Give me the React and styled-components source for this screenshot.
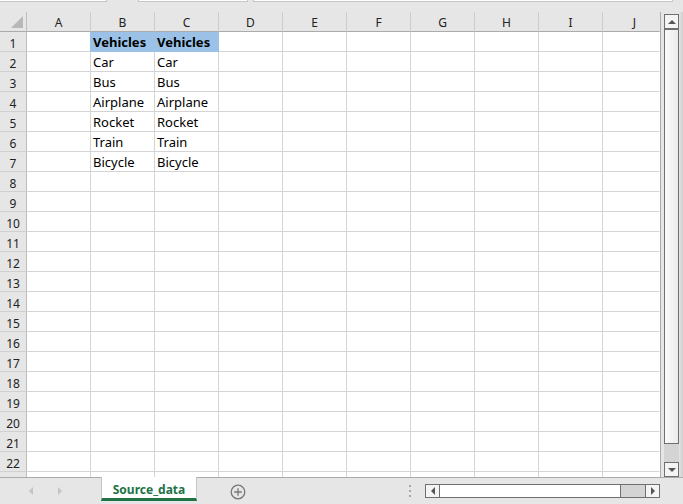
import React from "react";
import styled, { createGlobalStyle } from "styled-components";

const Global = createGlobalStyle`
  html, body { margin: 0; padding: 0; background: #e6e6e6; }
  * { box-sizing: border-box; }
`;

const Frame = styled.div`
  width: 683px;
  height: 504px;
  display: flex;
  flex-direction: column;
  background: #e6e6e6;
  overflow: hidden;
  font-family: "Noto Sans", "Liberation Sans", sans-serif;
`;

const TopStrip = styled.div`
  height: 12px;
  display: flex;
  align-items: flex-start;
  flex: none;
`;

const StripBox = styled.div`
  height: 2px;
  width: ${(p) => (p.$w ? `${p.$w}px` : "auto")};
  flex: ${(p) => (p.$w ? "none" : "1")};
  margin-left: ${(p) => p.$ml || 0}px;
  margin-right: ${(p) => p.$mr || 0}px;
  background: #fff;
  border: 1px solid #c6c6c6;
  border-top: none;
  border-left: ${(p) => (p.$noLeft ? "none" : "1px solid #c6c6c6")};
`;

const Main = styled.div`
  height: 465px;
  display: flex;
  flex: none;
`;

const Sheet = styled.div`
  width: 661px;
  height: 465px;
  overflow: hidden;
  border-right: 1px solid #ababab;
  display: flex;
  flex-direction: column;
  flex: none;
  background: #fff;
`;

const Row = styled.div`
  display: flex;
  height: 20px;
  flex: none;
`;

const Corner = styled.div`
  position: relative;
  width: 27px;
  height: 20px;
  background: #e6e6e6;
  border-right: 1px solid #bdbdbd;
  border-bottom: 1px solid #ababab;
  flex: none;
  &::after {
    content: "";
    position: absolute;
    right: 3px;
    bottom: 3px;
    width: 0;
    height: 0;
    border-left: 12px solid transparent;
    border-bottom: 12px solid #b8b8b8;
  }
`;

const ColHead = styled.div`
  width: ${(p) => p.$w}px;
  height: 20px;
  flex: none;
  background: #e6e6e6;
  border-right: 1px solid ${(p) => (p.$last ? "transparent" : "#cdcdcd")};
  border-bottom: 1px solid #ababab;
  display: flex;
  align-items: center;
  justify-content: center;
  font-size: 12px;
  color: #222;
  line-height: 1;
  padding-top: 3px;
  padding-left: ${(p) => (p.$last ? 7 : 0)}px;
`;

const RowHead = styled.div`
  width: 27px;
  height: 20px;
  flex: none;
  background: #e6e6e6;
  border-right: 1px solid #bdbdbd;
  border-bottom: 1px solid #d0d0d0;
  display: flex;
  align-items: center;
  justify-content: center;
  font-size: 12px;
  color: #222;
  line-height: 1;
  padding-top: 4px;
`;

const Cell = styled.div`
  width: ${(p) => p.$w}px;
  height: 20px;
  flex: none;
  background: ${(p) => (p.$fill ? "#9bc2e6" : "#fff")};
  border-right: 1px solid
    ${(p) => (p.$last ? "transparent" : p.$fill || p.$edge ? "#9bc2e6" : "#d4d4d4")};
  border-bottom: 1px solid ${(p) => (p.$fill ? "#9bc2e6" : "#d4d4d4")};
  font-size: 13px;
  line-height: 19px;
  padding: 1px 0 0 2px;
  color: #000;
  font-weight: ${(p) => (p.$bold ? 700 : 400)};
  white-space: nowrap;
  overflow: hidden;
`;

const VScroll = styled.div`
  width: 22px;
  display: flex;
  flex-direction: column;
  padding: 2px 4px 0 3px;
  background: linear-gradient(to right, #e6e6e6 80%, #cfcfcf);
`;

const ArrowBtn = styled.div`
  width: 15px;
  height: 15px;
  flex: none;
  border: 1px solid #6f6f6f;
  background: #f4f4f4;
  display: flex;
  align-items: center;
  justify-content: center;
`;

const VThumb = styled.div`
  flex: 1;
  border: 1px solid #6f6f6f;
  background: linear-gradient(to right, #fbfbfb, #ebebeb);
`;

const VTrack = styled.div`
  height: 18px;
  flex: none;
  background: #d4d4d4;
`;

const BottomBar = styled.div`
  height: 27px;
  flex: none;
  border-top: 1px solid #ababab;
  display: flex;
  align-items: flex-start;
  background: #e6e6e6;
`;

const Nav = styled.div`
  width: 101px;
  height: 26px;
  display: flex;
  align-items: center;
  padding-left: 29px;
  gap: 25px;
  flex: none;
`;

const Tab = styled.div`
  width: 96px;
  height: 24px;
  flex: none;
  margin-top: -1px;
  background: #fff;
  border-left: 1px solid #c6c6c6;
  border-right: 1px solid #c6c6c6;
  border-bottom: 3px solid #217346;
  color: #217346;
  font-size: 12px;
  font-weight: 700;
  display: flex;
  align-items: center;
  justify-content: center;
  padding-top: 3px;
`;

const AddBtn = styled.div`
  width: 16px;
  height: 16px;
  margin-left: 33px;
  margin-top: 5px;
  flex: none;
`;

const Dots = styled.div`
  width: 2px;
  margin-left: 163px;
  margin-top: 7px;
  display: flex;
  flex-direction: column;
  gap: 3px;
  flex: none;
  span {
    width: 2px;
    height: 2px;
    background: #a6a6a6;
  }
`;

const HScroll = styled.div`
  width: 235px;
  height: 14px;
  margin-left: 14px;
  margin-top: 6px;
  display: flex;
  flex: none;
  border: 1px solid #6f6f6f;
  background: #d4d4d4;
`;

const HBtn = styled.div`
  width: 14px;
  flex: none;
  background: #f4f4f4;
  border-${(p) => (p.$side === "left" ? "right" : "left")}: 1px solid #6f6f6f;
  display: flex;
  align-items: center;
  justify-content: center;
`;

const HThumb = styled.div`
  width: 181px;
  flex: none;
  background: #fff;
  border-right: 1px solid #6f6f6f;
`;

const HTrack = styled.div`
  flex: 1;
`;

const cols = ["A", "B", "C", "D", "E", "F", "G", "H", "I", "J"];
const widths = [64, 64, 64, 64, 64, 64, 64, 64, 64, 57];

const data = {
  1: { B: "Vehicles", C: "Vehicles" },
  2: { B: "Car", C: "Car" },
  3: { B: "Bus", C: "Bus" },
  4: { B: "Airplane", C: "Airplane" },
  5: { B: "Rocket", C: "Rocket" },
  6: { B: "Train", C: "Train" },
  7: { B: "Bicycle", C: "Bicycle" },
};

const Tri = ({ dir, color = "#555", size = 4 }) => {
  const s = size;
  const pts = {
    up: `0,${s} ${s * 2},${s} ${s},0`,
    down: `0,0 ${s * 2},0 ${s},${s}`,
    left: `${s},0 ${s},${s * 2} 0,${s}`,
    right: `0,0 0,${s * 2} ${s},${s}`,
  }[dir];
  const w = dir === "up" || dir === "down" ? s * 2 : s;
  const h = dir === "up" || dir === "down" ? s : s * 2;
  return (
    <svg width={w} height={h} viewBox={`0 0 ${w} ${h}`}>
      <polygon points={pts} fill={color} />
    </svg>
  );
};

export default function App() {
  const rows = [];
  for (let r = 1; r <= 23; r++) {
    rows.push(
      <Row key={r}>
        <RowHead>{r <= 22 ? r : ""}</RowHead>
        {cols.map((c, i) => {
          const v = data[r] && data[r][c];
          const fill = r === 1 && (c === "B" || c === "C");
          return (
            <Cell
              key={c}
              $w={widths[i]}
              $fill={fill}
              $edge={r === 1 && c === "A"}
              $bold={r === 1}
              $last={i === cols.length - 1}
            >
              {v || ""}
            </Cell>
          );
        })}
      </Row>
    );
  }

  return (
    <>
      <Global />
      <Frame>
        <TopStrip>
          <StripBox $w={107} $noLeft />
          <StripBox $w={110} $ml={31} />
          <StripBox $ml={5} $mr={10} />
        </TopStrip>
        <Main>
          <Sheet>
            <Row>
              <Corner />
              {cols.map((c, i) => (
                <ColHead key={c} $w={widths[i]} $last={i === cols.length - 1}>
                  {c}
                </ColHead>
              ))}
            </Row>
            {rows}
          </Sheet>
          <VScroll>
            <ArrowBtn>
              <Tri dir="up" />
            </ArrowBtn>
            <VThumb />
            <VTrack />
            <ArrowBtn>
              <Tri dir="down" />
            </ArrowBtn>
          </VScroll>
        </Main>
        <BottomBar>
          <Nav>
            <Tri dir="left" color="#c4c4c4" size={4} />
            <Tri dir="right" color="#c4c4c4" size={4} />
          </Nav>
          <Tab>Source_data</Tab>
          <AddBtn>
            <svg width="16" height="16" viewBox="0 0 16 16">
              <circle cx="8" cy="8" r="6.8" fill="none" stroke="#777" strokeWidth="1.3" />
              <path d="M8 4.2v7.6M4.2 8h7.6" stroke="#777" strokeWidth="1.3" />
            </svg>
          </AddBtn>
          <Dots>
            <span />
            <span />
            <span />
          </Dots>
          <HScroll>
            <HBtn $side="left">
              <Tri dir="left" size={4} />
            </HBtn>
            <HThumb />
            <HTrack />
            <HBtn $side="right">
              <Tri dir="right" size={4} />
            </HBtn>
          </HScroll>
        </BottomBar>
      </Frame>
    </>
  );
}
